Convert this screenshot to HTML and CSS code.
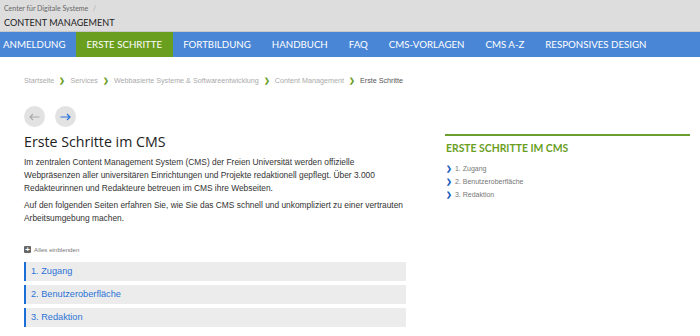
FILE: index.html
```html
<!DOCTYPE html>
<html lang="de">
<head>
    <meta charset="UTF-8">
    <title>Erste Schritte im CMS</title>
    <link rel="stylesheet" href="styles.css">
</head>
<body>
    <header class="site-head">
        <div class="parent">Center für Digitale Systeme <span class="sep">/</span></div>
        <div class="site-title">CONTENT MANAGEMENT</div>
    </header>
    <nav class="main-nav">
        <a href="#">ANMELDUNG</a>
        <a href="#" class="active">ERSTE SCHRITTE</a>
        <a href="#">FORTBILDUNG</a>
        <a href="#">HANDBUCH</a>
        <a href="#">FAQ</a>
        <a href="#">CMS-VORLAGEN</a>
        <a href="#">CMS A-Z</a>
        <a href="#">RESPONSIVES DESIGN</a>
    </nav>

    <div class="page">
        <div class="crumbs">
            <a href="#">Startseite</a><span class="chev">&#x276F;</span>
            <a href="#">Services</a><span class="chev">&#x276F;</span>
            <a href="#">Webbasierte Systeme &amp; Softwareentwicklung</a><span class="chev">&#x276F;</span>
            <a href="#">Content Management</a><span class="chev">&#x276F;</span>
            <span class="current">Erste Schritte</span>
        </div>

        <div class="columns">
            <main class="main">
                <div class="pager">
                    <span class="round prev">
                        <svg width="11" height="8" viewBox="0 0 11 8"><path d="M10.5 4H1M4 1L1 4l3 3" fill="none" stroke="#aaa" stroke-width="1.2"/></svg>
                    </span>
                    <span class="round next">
                        <svg width="11" height="8" viewBox="0 0 11 8"><path d="M0.5 4H10M7 1l3 3-3 3" fill="none" stroke="#2b73d6" stroke-width="1.2"/></svg>
                    </span>
                </div>

                <h1>Erste Schritte im CMS</h1>
                <p>Im zentralen Content Management System (CMS) der Freien Universität werden offizielle Webpräsenzen aller universitären Einrichtungen und Projekte redaktionell gepflegt. Über 3.000 Redakteurinnen und Redakteure betreuen im CMS ihre Webseiten.</p>
                <p>Auf den folgenden Seiten erfahren Sie, wie Sie das CMS schnell und unkompliziert zu einer vertrauten Arbeitsumgebung machen.</p>

                <div class="expand-all">
                    <span class="plus">+</span> Alles einblenden
                </div>
                <div class="accordion">
                    <a href="#" class="acc-item">1. Zugang</a>
                    <a href="#" class="acc-item">2. Benutzeroberfläche</a>
                    <a href="#" class="acc-item">3. Redaktion</a>
                </div>
            </main>

            <aside class="side">
                <h2>ERSTE SCHRITTE IM CMS</h2>
                <ul>
                    <li><span class="chev-blue">&#x276F;</span> 1. Zugang</li>
                    <li><span class="chev-blue">&#x276F;</span> 2. Benutzeroberfläche</li>
                    <li><span class="chev-blue">&#x276F;</span> 3. Redaktion</li>
                </ul>
            </aside>
        </div>
    </div>
</body>
</html>
```

FILE: styles.css
```css
body {
    margin: 0;
    font-family: 'Liberation Sans', Arial, sans-serif;
    color: #333;
    background-color: #fff;
}
a {
    text-decoration: none;
}
.site-head {
    background-color: #dddddd;
    border-bottom: 1px solid #c8c8c8;
    padding: 2px 4px 0;
    height: 32px;
    box-sizing: border-box;
    font-family: 'Lato', sans-serif;
}
.parent {
    font-size: 7px;
    color: #666;
    line-height: 12px;
}
.parent .sep {
    color: #aaa;
    margin-left: 3px;
}
.site-title {
    font-size: 9.1px;
    color: #222;
    line-height: 14px;
    margin-top: 2px;
}
.main-nav {
    display: flex;
    background-color: #4a86d6;
    height: 25px;
    font-family: 'Lato', sans-serif;
    white-space: nowrap;
}
.main-nav a {
    color: #fff;
    font-size: 9.7px;
    line-height: 25px;
    padding: 0 10.5px;
    flex-shrink: 0;
}
.main-nav a:first-child {
    padding-left: 3px;
}
.main-nav a.active {
    background-color: #6a9e1f;
}
.page {
    padding: 0 10px 0 24px;
}
.crumbs {
    font-size: 7.2px;
    color: #aaa;
    margin-top: 18px;
    line-height: 12px;
    white-space: nowrap;
}
.crumbs a {
    color: #aaa;
}
.crumbs .chev {
    color: #6a9e1f;
    font-size: 6.5px;
    font-weight: bold;
    margin: 0 3px 0 5px;
}
.crumbs .current {
    color: #555;
}
.columns {
    display: flex;
    gap: 39px;
}
.main {
    width: 382px;
}
.pager {
    display: flex;
    gap: 10px;
    margin-top: 19px;
}
.round {
    width: 21px;
    height: 21px;
    border-radius: 50%;
    background-color: #e2e2e2;
    display: flex;
    align-items: center;
    justify-content: center;
}
h1 {
    font-family: 'Open Sans', sans-serif;
    font-weight: normal;
    font-size: 14.2px;
    color: #222;
    margin: 5px 0 4px;
    line-height: 20px;
}
p {
    font-size: 8.4px;
    line-height: 13px;
    color: #333;
    margin: 0 0 4px;
}
.expand-all {
    font-size: 6.2px;
    color: #777;
    margin-top: 21px;
    display: flex;
    align-items: center;
    gap: 3px;
}
.plus {
    display: inline-flex;
    width: 7px;
    height: 7px;
    background-color: #666;
    color: #fff;
    font-size: 8px;
    font-weight: bold;
    align-items: center;
    justify-content: center;
    border-radius: 1px;
}
.accordion {
    margin-top: 9px;
    display: flex;
    flex-direction: column;
    gap: 4px;
}
.acc-item {
    display: block;
    background-color: #ececec;
    border-left: 2px solid #1a6ed8;
    color: #2b73d6;
    font-size: 9.2px;
    line-height: 19px;
    padding-left: 5px;
}
.side {
    width: 245px;
    border-top: 2px solid #6a9e2f;
    margin-top: 47px;
    align-self: flex-start;
}
.side h2 {
    font-family: 'Lato', sans-serif;
    font-size: 10.4px;
    font-weight: bold;
    color: #6a9e1f;
    margin: 5px 0 6px 1px;
    line-height: 15px;
}
.side ul {
    list-style: none;
    margin: 0;
    padding: 0 0 0 1px;
}
.side li {
    font-size: 7px;
    color: #777;
    line-height: 13px;
}
.chev-blue {
    color: #1a5fc0;
    font-size: 7px;
    font-weight: bold;
    margin-right: 1px;
}
```
